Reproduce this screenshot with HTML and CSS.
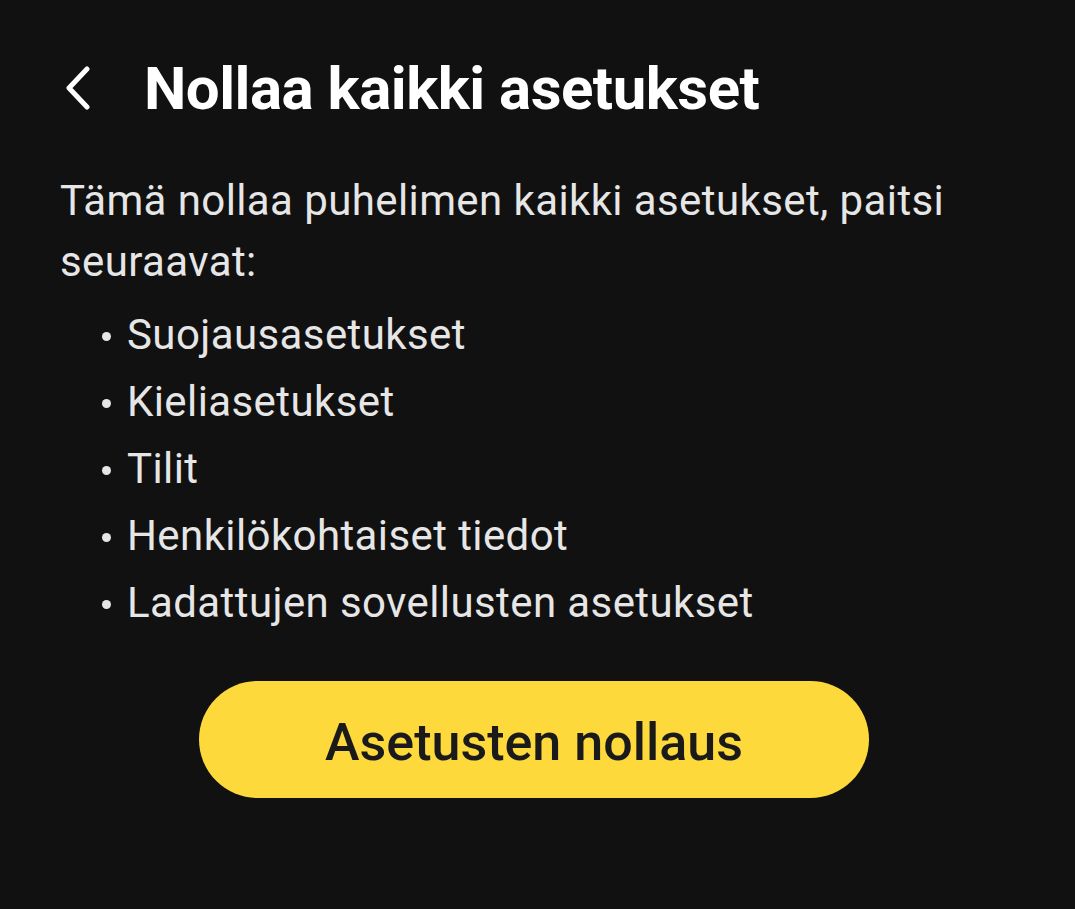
FILE: index.html
```html
<!DOCTYPE html>
<html lang="fi">
<head>
<meta charset="utf-8">
<link rel="stylesheet" href="styles.css">
</head>
<body>
<div class="screen">
  <header class="topbar">
    <span class="back">
      <svg width="30" height="44" viewBox="0 0 30 44"><path d="M25 3 L7 22 L25 41" fill="none" stroke="#ffffff" stroke-width="5" stroke-linecap="round" stroke-linejoin="round"/></svg>
    </span>
    <h1 class="title">Nollaa kaikki asetukset</h1>
  </header>
  <p class="desc">Tämä nollaa puhelimen kaikki asetukset, paitsi seuraavat:</p>
  <ul class="list">
    <li>Suojausasetukset</li>
    <li>Kieliasetukset</li>
    <li>Tilit</li>
    <li>Henkilökohtaiset tiedot</li>
    <li>Ladattujen sovellusten asetukset</li>
  </ul>
  <div class="actions">
    <button class="reset">Asetusten nollaus</button>
  </div>
</div>
</body>
</html>
```

FILE: styles.css
```css
html, body {
  margin: 0;
  padding: 0;
  background: #111111;
}
.screen {
  width: 1075px;
  height: 909px;
  background: #111111;
  font-family: Roboto, "Noto Sans", sans-serif;
  color: #e8e8e8;
  box-sizing: border-box;
  padding: 48px 0 0 60px;
}
.topbar {
  display: flex;
  align-items: center;
  height: 80px;
}
.back {
  display: flex;
  width: 82px;
  padding-left: 2px;
}
.title {
  margin: 0;
  font-size: 60px;
  font-weight: 700;
  color: #ffffff;
  letter-spacing: -0.5px;
}
.desc {
  margin: 42px 0 0;
  width: 960px;
  font-size: 42px;
  line-height: 61px;
  letter-spacing: 0.4px;
  color: #e6e6e6;
}
.list {
  margin: 9px 0 0;
  padding: 0 0 0 42px;
  list-style: none;
}
.list li {
  font-size: 42px;
  line-height: 67px;
  letter-spacing: 0.4px;
  color: #e6e6e6;
  display: flex;
  align-items: center;
}
.list li::before {
  content: "";
  width: 9px;
  height: 9px;
  border-radius: 50%;
  background: #e6e6e6;
  margin: 4px 16px 0 0;
  flex: none;
}
.actions {
  margin-top: 45px;
  padding-left: 139px;
}
.reset {
  width: 670px;
  height: 117px;
  border: none;
  border-radius: 59px;
  background: #fdd93b;
  color: #1a1a1a;
  font-family: Roboto, "Noto Sans", sans-serif;
  font-size: 52px;
  font-weight: 500;
  padding: 5px 0 0;
}
```
